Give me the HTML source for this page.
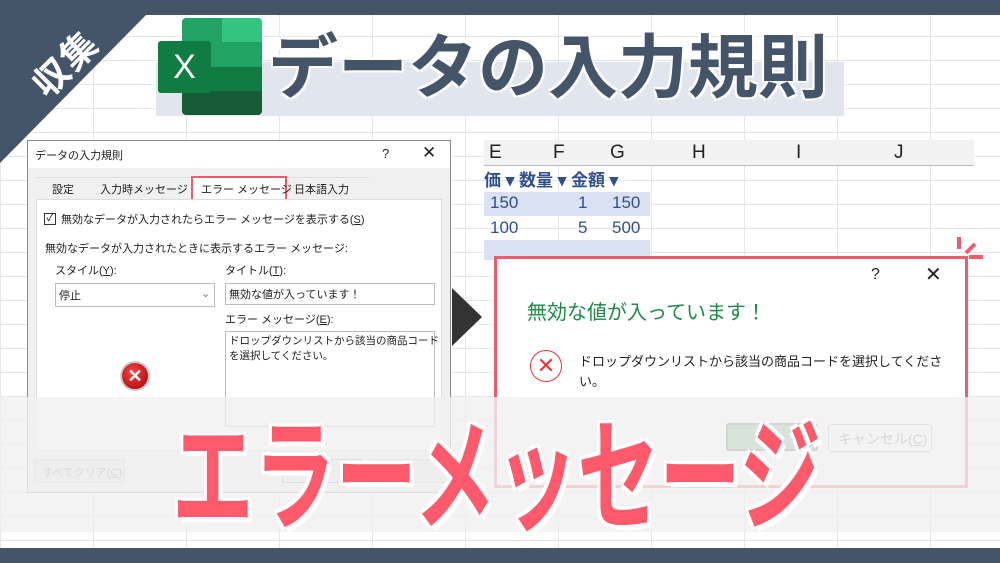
<!DOCTYPE html>
<html><head><meta charset="utf-8"><style>
*{margin:0;padding:0;box-sizing:border-box}
body{width:1000px;height:563px;overflow:hidden;position:relative;background:#fff;font-family:"Liberation Sans","Noto Sans CJK JP",sans-serif;}
.grid{position:absolute;inset:0;background-image:linear-gradient(#e6e6e6 1px,transparent 1px),linear-gradient(90deg,#e6e6e6 1px,transparent 1px);background-size:93px 24px;background-position:0 12px}
.abs{position:absolute}
.dlg{background:#f0f0f0;border:1px solid #8a8a8a}
.t{position:absolute;font-size:11px;color:#222;white-space:nowrap}
</style></head><body>
<div class="grid"></div>
<div class="abs" style="left:0;top:0;width:1000px;height:15px;background:#445469"></div>
<div class="abs" style="left:0;top:548px;width:1000px;height:15px;background:#445469"></div>
<svg class="abs" style="left:0;top:0" width="160" height="170"><polygon points="0,14 147,14 0,163" fill="#445469"/></svg>
<div class="abs" style="left:14px;top:36px;transform:rotate(-45deg);transform-origin:center;color:#fff;font-weight:bold;font-size:36px;letter-spacing:2px;width:100px;text-align:center">収集</div>
<!-- title band -->
<div class="abs" style="left:156px;top:62px;width:688px;height:54px;background:#e1e6ee"></div>
<!-- excel logo -->
<div class="abs" style="left:182px;top:18px;width:80px;height:97px;border-radius:4px;overflow:hidden">
<div style="height:25%;background:linear-gradient(90deg,#21a366 50%,#33c481 50%)"></div>
<div style="height:25%;background:#21a366"></div>
<div style="height:25%;background:#107c41"></div>
<div style="height:25%;background:#185c37"></div></div>
<div class="abs" style="left:158px;top:41px;width:53px;height:52px;background:#107c41;border-radius:3px;color:#fff;font-size:34px;text-align:center;line-height:52px">X</div>
<div class="abs" style="left:268px;top:18px;font-size:70px;font-weight:bold;color:#445469;line-height:100px;white-space:nowrap;text-shadow:2px 2px 0 #fff,-2px -2px 0 #fff,2px -2px 0 #fff,-2px 2px 0 #fff">データの入力規則</div>
<!-- left dialog -->
<div class="abs dlg" style="left:27px;top:140px;width:424px;height:353px">
<div class="abs" style="left:0;top:0;width:422px;height:27px;background:#fff"></div>
<div class="t" style="left:7px;top:6px">データの入力規則</div>
<div class="t" style="left:354px;top:5px;font-size:13px">?</div>
<div class="t" style="left:394px;top:2px;font-size:17px">✕</div>
<div class="abs" style="left:8px;top:36px;width:333px;height:22px;background:#f0f0f0;border-top:1px solid #ddd"></div>
<div class="t" style="left:24px;top:40px">設定</div>
<div class="t" style="left:72px;top:40px">入力時メッセージ</div>
<div class="abs" style="left:163px;top:35px;width:96px;height:25px;border:2px solid #f25a6a;background:#fff"></div>
<div class="t" style="left:173px;top:40px">エラー メッセージ</div>
<div class="t" style="left:266px;top:40px">日本語入力</div>
<div class="abs" style="left:8px;top:58px;width:406px;height:252px;background:#fff;border:1px solid #ddd"></div>
<div class="abs" style="left:16px;top:72px;width:12px;height:12px;border:1px solid #333;font-size:10px;line-height:10px;text-align:center">✓</div>
<div class="t" style="left:33px;top:70px">無効なデータが入力されたらエラー メッセージを表示する(<u>S</u>)</div>
<div class="t" style="left:17px;top:99px">無効なデータが入力されたときに表示するエラー メッセージ:</div>
<div class="t" style="left:27px;top:121px">スタイル(<u>Y</u>):</div>
<div class="abs" style="left:27px;top:142px;width:160px;height:24px;border:1px solid #bbb;background:#fff"></div>
<div class="t" style="left:31px;top:146px">停止</div>
<div class="t" style="left:173px;top:146px;color:#777">⌄</div>
<div class="t" style="left:197px;top:121px">タイトル(<u>T</u>):</div>
<div class="abs" style="left:197px;top:142px;width:210px;height:22px;border:1px solid #bbb;background:#fff"></div>
<div class="t" style="left:201px;top:145px">無効な値が入っています！</div>
<div class="t" style="left:197px;top:170px">エラー メッセージ(<u>E</u>):</div>
<div class="abs" style="left:197px;top:190px;width:210px;height:96px;border:1px solid #bbb;background:#fff"></div>
<div class="t" style="left:201px;top:193px;font-size:10.5px;line-height:15px">ドロップダウンリストから該当の商品コード<br>を選択してください。</div>
<div class="abs" style="left:92px;top:220px;width:30px;height:30px;border-radius:50%;background:radial-gradient(circle at 40% 35%,#e44,#a00);border:2px solid #ccc;color:#fff;font-weight:bold;font-size:18px;text-align:center;line-height:26px">✕</div>
<div class="abs" style="left:6px;top:318px;width:91px;height:24px;border:1px solid #ccc;background:#e6e6e6"></div>
<div class="t" style="left:14px;top:323px;color:#888">すべてクリア(<u>C</u>)</div>
<div class="abs" style="left:254px;top:318px;width:79px;height:24px;border:1px solid #7ab;background:#e6e6e6"></div>
<div class="abs" style="left:343px;top:318px;width:79px;height:24px;border:1px solid #ccc;background:#e6e6e6"></div>
</div>
<!-- arrow -->
<svg class="abs" style="left:452px;top:288px" width="32" height="58"><polygon points="0,0 30,29 0,58" fill="#333"/></svg>
<!-- sheet -->
<div class="abs" style="left:484px;top:140px;width:490px;height:26px;background:#f2f2f2;border-bottom:1px solid #bbb"></div>
<div class="t" style="left:489px;top:142px;font-size:19px">E</div>
<div class="t" style="left:553px;top:142px;font-size:19px">F</div>
<div class="t" style="left:610px;top:142px;font-size:19px">G</div>
<div class="t" style="left:692px;top:142px;font-size:19px">H</div>
<div class="t" style="left:796px;top:142px;font-size:19px">I</div>
<div class="t" style="left:894px;top:142px;font-size:19px">J</div>
<div class="abs" style="left:484px;top:192px;width:166px;height:24px;background:#d9e1f2"></div>
<div class="abs" style="left:484px;top:240px;width:166px;height:20px;background:#d9e1f2"></div>
<div class="t" style="left:484px;top:166px;font-size:17px;font-weight:bold;color:#2f4f8f">価 ▾ 数量 ▾ 金額 ▾</div>
<div class="t" style="left:490px;top:193px;font-size:17px;color:#2f4f8f">150</div><div class="t" style="left:578px;top:193px;font-size:17px;color:#2f4f8f">1</div><div class="t" style="left:612px;top:193px;font-size:17px;color:#2f4f8f">150</div>
<div class="t" style="left:490px;top:218px;font-size:17px;color:#2f4f8f">100</div><div class="t" style="left:578px;top:218px;font-size:17px;color:#2f4f8f">5</div><div class="t" style="left:612px;top:218px;font-size:17px;color:#2f4f8f">500</div>
<!-- error dialog -->
<div class="abs" style="left:494px;top:256px;width:474px;height:232px;background:#fff;border:3px solid #f25a6a"></div>
<div class="t" style="left:871px;top:266px;font-size:16px">?</div>
<div class="t" style="left:925px;top:262px;font-size:20px">✕</div>
<div class="t" style="left:527px;top:296px;font-size:20px;color:#1e8a46">無効な値が入っています！</div>
<div class="abs" style="left:530px;top:350px;width:32px;height:32px;border:1.5px solid #e33;border-radius:50%;color:#e33;font-size:22px;text-align:center;line-height:29px">✕</div>
<div class="t" style="left:579px;top:352px;font-size:13px;line-height:20px">ドロップダウンリストから該当の商品コードを選択してくださ<br>い。</div>
<div class="abs" style="left:726px;top:423px;width:92px;height:28px;background:#7aae8a;border:2px solid #666;border-radius:3px"></div>
<div class="abs" style="left:828px;top:424px;width:104px;height:28px;border:1px solid #bbb;border-radius:3px;background:#fff"></div>
<div class="t" style="left:838px;top:429px;font-size:14px;color:#777">キャンセル(<u>C</u>)</div>
<svg class="abs" style="left:955px;top:235px" width="35" height="35"><path d="M4 2v12M20 9l-9 9M14 22h14" stroke="#f25a6a" stroke-width="4"/></svg>
<!-- overlay band -->
<div class="abs" style="left:0;top:397px;width:1000px;height:135px;background:rgba(240,240,240,0.8)"></div>
<div class="abs" style="left:172px;top:408px;font-size:122px;font-weight:bold;color:#ff5a6b;line-height:140px;white-space:nowrap;transform:scaleX(0.67);transform-origin:0 0;text-shadow:4px 3px 0 #fff,-4px -3px 0 #fff,4px -3px 0 #fff,-4px 3px 0 #fff,6px 5px 0 #fff">エラーメッセージ</div>
</body></html>
